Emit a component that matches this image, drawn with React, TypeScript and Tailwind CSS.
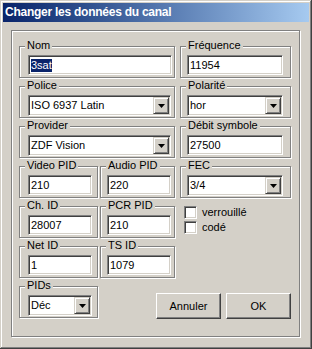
import React from 'react';

const sunken =
  'border border-t-[#808080] border-l-[#808080] border-b-white border-r-white shadow-[inset_1px_1px_0_#404040,inset_-1px_-1px_0_#d4d0c8]';
const raised =
  'border border-t-[#d4d0c8] border-l-[#d4d0c8] border-r-[#404040] border-b-[#404040] shadow-[inset_1px_1px_0_#fff,inset_-1px_-1px_0_#808080] bg-[#d4d0c8]';
const etched = 'border border-[#808080] shadow-[inset_1px_1px_0_#fff,1px_1px_0_#fff]';

const Group: React.FC<{ label: string; className: string; children: React.ReactNode }> = ({ label, className, children }) => (
  <div className={`relative h-[32px] shrink-0 ${etched} ${className}`}>
    <span className="absolute left-[5px] top-[-8px] bg-[#d4d0c8] px-[2px] leading-[13px] whitespace-nowrap">{label}</span>
    {children}
  </div>
);

const Field: React.FC<{ value: string; w: string; selected?: boolean }> = ({ value, w, selected }) => (
  <div className={`h-[20px] ${w} ${sunken} bg-white flex items-center pl-[2px]`}>
    {selected ? (
      <span className="bg-[#0a246a] text-white leading-[13px]">{value}</span>
    ) : (
      <span className="leading-[13px]">{value}</span>
    )}
  </div>
);

const Arrow = () => (
  <svg width="7" height="4" viewBox="0 0 7 4">
    <polygon points="0,0 7,0 3.5,4" fill="#000" />
  </svg>
);

const Combo: React.FC<{ value: string; w: string }> = ({ value, w }) => (
  <div className={`h-[21px] ${w} ${sunken} bg-white flex p-[1px]`}>
    <span className="flex-1 flex items-center pl-[1px] leading-[13px]">{value}</span>
    <div className={`w-[16px] ${raised} flex items-center justify-center`}>
      <Arrow />
    </div>
  </div>
);

const Check: React.FC<{ label: string }> = ({ label }) => (
  <div className="flex items-center gap-[5px] h-[13px]">
    <div className={`w-[13px] h-[13px] ${sunken} bg-white`}></div>
    <span className="leading-[13px]">{label}</span>
  </div>
);

const Button: React.FC<{ label: string }> = ({ label }) => (
  <button className="w-[65px] h-[26px] bg-[#d4d0c8] border border-t-white border-l-white border-r-[#404040] border-b-[#404040] shadow-[inset_-1px_-1px_0_#808080] flex items-center justify-center leading-[13px]">
    {label}
  </button>
);

export default function App() {
  return (
    <div
      className="w-[312px] h-[349px] bg-[#d4d0c8] p-[3px] flex flex-col text-[11px] text-black shadow-[inset_-1px_-1px_0_#404040,inset_1px_1px_0_#d4d0c8,inset_-2px_-2px_0_#808080,inset_2px_2px_0_#fff]"
      style={{ fontFamily: '"Liberation Sans", Arial, sans-serif' }}
    >
      {/* Title bar */}
      <div className="h-[19px] shrink-0 bg-gradient-to-r from-[#0a246a] to-[#a6caf0] flex items-center pl-[2px]">
        <span className="text-white font-bold text-[12px] tracking-[-0.25px] leading-[19px]">Changer les données du canal</span>
      </div>

      <div className="pl-[8px] pt-[8px]">
        <div className={`w-[289px] h-[307px] ${etched} pl-[7px] pt-[15px] flex flex-col gap-[8px]`}>
          {/* Row 1 */}
          <div className="flex">
            <Group label="Nom" className="w-[156px] pl-[8px] pt-[8px]">
              <Field value="3sat" w="w-[144px]" selected />
            </Group>
            <Group label="Fréquence" className="ml-[5px] w-[111px] pl-[6px] pt-[8px]">
              <Field value="11954" w="w-[96px]" />
            </Group>
          </div>

          {/* Row 2 */}
          <div className="flex">
            <Group label="Police" className="w-[156px] pl-[8px] pt-[8px]">
              <Combo value="ISO 6937 Latin" w="w-[143px]" />
            </Group>
            <Group label="Polarité" className="ml-[5px] w-[111px] pl-[6px] pt-[8px]">
              <Combo value="hor" w="w-[96px]" />
            </Group>
          </div>

          {/* Row 3 */}
          <div className="flex">
            <Group label="Provider" className="w-[156px] pl-[8px] pt-[8px]">
              <Combo value="ZDF Vision" w="w-[143px]" />
            </Group>
            <Group label="Débit symbole" className="ml-[5px] w-[111px] pl-[6px] pt-[8px]">
              <Field value="27500" w="w-[96px]" />
            </Group>
          </div>

          {/* Row 4 */}
          <div className="flex">
            <Group label="Video PID" className="w-[79px] pl-[8px] pt-[8px]">
              <Field value="210" w="w-[64px]" />
            </Group>
            <Group label="Audio PID" className="ml-[2px] w-[75px] pl-[6px] pt-[8px]">
              <Field value="220" w="w-[64px]" />
            </Group>
            <Group label="FEC" className="ml-[5px] w-[111px] pl-[6px] pt-[8px]">
              <Combo value="3/4" w="w-[96px]" />
            </Group>
          </div>

          {/* Row 5 */}
          <div className="flex">
            <Group label="Ch. ID" className="w-[79px] pl-[8px] pt-[8px]">
              <Field value="28007" w="w-[64px]" />
            </Group>
            <Group label="PCR PID" className="ml-[2px] w-[75px] pl-[6px] pt-[8px]">
              <Field value="210" w="w-[64px]" />
            </Group>
            <div className="ml-[9px] flex flex-col gap-[2px]">
              <Check label="verrouillé" />
              <Check label="codé" />
            </div>
          </div>

          {/* Row 6 */}
          <div className="flex">
            <Group label="Net ID" className="w-[79px] pl-[8px] pt-[8px]">
              <Field value="1" w="w-[64px]" />
            </Group>
            <Group label="TS ID" className="ml-[2px] w-[75px] pl-[6px] pt-[8px]">
              <Field value="1079" w="w-[64px]" />
            </Group>
          </div>

          {/* Row 7 */}
          <div className="flex">
            <Group label="PIDs" className="w-[79px] pl-[8px] pt-[8px]">
              <Combo value="Déc" w="w-[64px]" />
            </Group>
            <div className="ml-[58px] pt-[7px] flex gap-[5px]">
              <Button label="Annuler" />
              <Button label="OK" />
            </div>
          </div>
        </div>
      </div>
    </div>
  );
}
